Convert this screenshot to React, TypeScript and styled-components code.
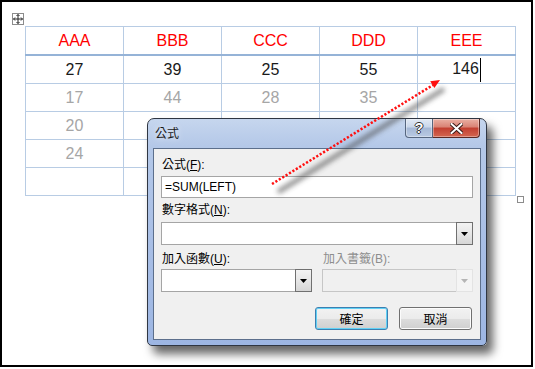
import styled, { createGlobalStyle } from "styled-components";

const GlobalStyle = createGlobalStyle`
  html, body { margin: 0; padding: 0; background: #fff; }
  body { font-family: "Liberation Sans", Arial, sans-serif; }
`;

const CJK = `"Liberation Sans", "Noto Sans CJK TC", sans-serif`;

const Frame = styled.div`
  position: relative;
  box-sizing: border-box;
  width: 533px;
  height: 367px;
  border: 2px solid #000;
  background: #fff;
  overflow: hidden;
  padding: 24px 0 0 23px;
`;

const TableWrap = styled.div`
  position: relative;
  width: 491px;
`;

const MoveHandle = styled.div`
  position: absolute;
  left: -13px;
  top: -13px;
  width: 12px;
  height: 12px;
  box-sizing: border-box;
  border: 1px solid #8c8c8c;
  background: #fff;
  display: flex;
  align-items: center;
  justify-content: center;
`;

const ResizeHandle = styled.div`
  position: absolute;
  left: calc(100% + 1px);
  top: 100%;
  width: 7px;
  height: 7px;
  box-sizing: border-box;
  border: 1px solid #8c8c8c;
  background: #fff;
`;

const Grid = styled.table`
  border-collapse: collapse;
  table-layout: fixed;
  width: 491px;
  font-family: "Liberation Sans", Arial, sans-serif;
  font-size: 16px;
`;

type Tone = "head" | "dark" | "dim";

const toneColor: Record<Tone, string> = {
  head: "#ff0000",
  dark: "#1a1a1a",
  dim: "#a6a6a6",
};

const Cell = styled.td<{ $tone: Tone }>`
  border: 1px solid #b8cce4;
  border-bottom: ${(p) => (p.$tone === "head" ? "2px solid #95b3d7" : "1px solid #b8cce4")};
  height: 27px;
  padding: 0;
  text-align: center;
  color: ${(p) => toneColor[p.$tone]};
`;

const Caret = styled.span`
  display: inline-block;
  width: 1px;
  height: 24px;
  margin-left: 1px;
  background: #000;
  vertical-align: middle;
`;

const Dialog = styled.div`
  position: absolute;
  left: 145px;
  top: 116px;
  width: 340px;
  height: 228px;
  box-sizing: border-box;
  border: 1px solid #2f3642;
  border-radius: 7px 7px 5px 5px;
  background: linear-gradient(
    to bottom,
    #c6d6ee 0%,
    #b4c8e8 12%,
    #aac0e6 50%,
    #9db6e3 100%
  );
  box-shadow: 6px 8px 10px rgba(0, 0, 0, 0.6);
  padding: 0 5px 5px 5px;
  display: flex;
  flex-direction: column;
  font-family: ${CJK};
  font-size: 12px;
`;

const TitleBar = styled.div`
  height: 29px;
  display: flex;
  justify-content: space-between;
  align-items: flex-start;
`;

const Title = styled.div`
  margin: 7px 0 0 2px;
  line-height: 16px;
  color: #1a1a1a;
  text-shadow: 0 0 6px rgba(255, 255, 255, 0.9);
`;

const CaptionGroup = styled.div`
  display: flex;
  margin-right: 1px;
`;

const CaptionButton = styled.div<{ $kind: "help" | "close" }>`
  box-sizing: border-box;
  height: 19px;
  width: ${(p) => (p.$kind === "help" ? "28px" : "47px")};
  border: 1px solid ${(p) => (p.$kind === "help" ? "#56667f" : "#5a2823")};
  border-top: none;
  border-left-width: ${(p) => (p.$kind === "help" ? "1px" : "0")};
  border-radius: ${(p) => (p.$kind === "help" ? "0 0 0 4px" : "0 0 4px 0")};
  background: ${(p) =>
    p.$kind === "help"
      ? "linear-gradient(to bottom, #e2eaf5 0%, #c9d6ea 45%, #a5b8d6 50%, #b9cae3 100%)"
      : "linear-gradient(to bottom, #eab0a4 0%, #d98274 45%, #c23f31 50%, #d46650 100%)"};
  box-shadow: inset 0 0 0 1px rgba(255, 255, 255, 0.35);
  display: flex;
  align-items: center;
  justify-content: center;
  color: #fff;
  font: bold 14px "Liberation Sans", Arial, sans-serif;
  text-shadow: 1px 0 0 #333, -1px 0 0 #333, 0 1px 0 #333, 0 -1px 0 #333;
`;

const Client = styled.div`
  flex: 1;
  box-sizing: border-box;
  background: #f0f0f0;
  border: 1px solid #5c6f8c;
  padding: 8px 7px 0 7px;
  display: flex;
  flex-direction: column;
`;

const Label = styled.div<{ $gap: number; $disabled?: boolean }>`
  margin-top: ${(p) => p.$gap}px;
  padding-left: 1px;
  line-height: 16px;
  height: 16px;
  color: ${(p) => (p.$disabled ? "#8d8d8d" : "#000")};
  u { text-decoration: underline; }
`;

const TextBox = styled.div`
  margin-top: 3px;
  height: 22px;
  box-sizing: border-box;
  border: 1px solid #a5a5a5;
  background: #fff;
  padding-left: 3px;
  font: 12px "Liberation Sans", Arial, sans-serif;
  line-height: 20px;
  color: #000;
`;

const Combo = styled.div<{ $gap: number; $disabled?: boolean }>`
  margin-top: ${(p) => p.$gap}px;
  height: 23px;
  box-sizing: border-box;
  border: 1px solid ${(p) => (p.$disabled ? "#c6c6c6" : "#a5a5a5")};
  background: ${(p) => (p.$disabled ? "#f0f0f0" : "#fff")};
  display: flex;
  justify-content: flex-end;
`;

const DropButton = styled.div<{ $disabled?: boolean }>`
  width: 17px;
  box-sizing: border-box;
  border: 1px solid ${(p) => (p.$disabled ? "#e3e3e3" : "#707070")};
  margin: -1px -1px -1px 0;
  background: ${(p) =>
    p.$disabled ? "#f4f4f4" : "linear-gradient(to bottom, #f3f3f3, #e6e6e6 50%, #d6d6d6)"};
  display: flex;
  align-items: center;
  justify-content: center;
`;

const Columns = styled.div`
  display: grid;
  grid-template-columns: 1fr 1fr;
  column-gap: 10px;
`;

const Column = styled.div`
  display: flex;
  flex-direction: column;
`;

const ButtonRow = styled.div`
  margin-top: 15px;
  display: flex;
  justify-content: flex-end;
  gap: 11px;
  padding-right: 1px;
`;

const PushButton = styled.div<{ $focus?: boolean }>`
  width: 73px;
  height: 23px;
  box-sizing: border-box;
  border: 1px solid ${(p) => (p.$focus ? "#3c7fb1" : "#707070")};
  border-radius: 3px;
  background: linear-gradient(to bottom, #f2f2f2 0%, #ebebeb 50%, #dddddd 51%, #cfcfcf 100%);
  box-shadow: inset 0 0 0 1px ${(p) => (p.$focus ? "#61d1f5" : "#fcfcfc")};
  display: flex;
  align-items: center;
  justify-content: center;
  color: #000;
`;

const ArrowLayer = styled.svg`
  position: absolute;
  left: -2px;
  top: -2px;
  pointer-events: none;
`;

function Triangle({ disabled }: { disabled?: boolean }) {
  return (
    <svg width="7" height="4" viewBox="0 0 7 4">
      <polygon points="0,0 7,0 3.5,4" fill={disabled ? "#b5b5b5" : "#000"} />
    </svg>
  );
}

const rows: { tone: Tone; cells: string[] }[] = [
  { tone: "head", cells: ["AAA", "BBB", "CCC", "DDD", "EEE"] },
  { tone: "dark", cells: ["27", "39", "25", "55", "146"] },
  { tone: "dim", cells: ["17", "44", "28", "35", ""] },
  { tone: "dim", cells: ["20", "", "", "", ""] },
  { tone: "dim", cells: ["24", "", "", "", ""] },
  { tone: "dim", cells: ["", "", "", "", ""] },
];

export default function App() {
  return (
    <>
      <GlobalStyle />
      <Frame>
        <TableWrap>
          <MoveHandle>
            <svg width="10" height="10" viewBox="0 0 10 10">
              <path
                d="M5 0.5 L5 9.5 M0.5 5 L9.5 5 M3.5 2 L5 0.5 L6.5 2 M3.5 8 L5 9.5 L6.5 8 M2 3.5 L0.5 5 L2 6.5 M8 3.5 L9.5 5 L8 6.5"
                stroke="#222"
                strokeWidth="1"
                fill="none"
              />
            </svg>
          </MoveHandle>
          <Grid>
            <tbody>
              {rows.map((row, r) => (
                <tr key={r}>
                  {row.cells.map((c, i) => (
                    <Cell key={i} $tone={row.tone}>
                      {c}
                      {r === 1 && i === 4 && <Caret />}
                    </Cell>
                  ))}
                </tr>
              ))}
            </tbody>
          </Grid>
          <ResizeHandle />
        </TableWrap>

        <Dialog>
          <TitleBar>
            <Title>公式</Title>
            <CaptionGroup>
              <CaptionButton $kind="help">?</CaptionButton>
              <CaptionButton $kind="close">
                <svg width="13" height="11" viewBox="0 0 13 11">
                  <path
                    d="M1.5 1 L11.5 10 M11.5 1 L1.5 10"
                    stroke="#3a1a16"
                    strokeWidth="4"
                    strokeLinecap="square"
                  />
                  <path
                    d="M1.5 1 L11.5 10 M11.5 1 L1.5 10"
                    stroke="#fff"
                    strokeWidth="2"
                    strokeLinecap="square"
                  />
                </svg>
              </CaptionButton>
            </CaptionGroup>
          </TitleBar>
          <Client>
            <Label $gap={0}>
              公式(<u>F</u>):
            </Label>
            <TextBox>=SUM(LEFT)</TextBox>
            <Label $gap={4}>
              數字格式(<u>N</u>):
            </Label>
            <Combo $gap={4}>
              <DropButton>
                <Triangle />
              </DropButton>
            </Combo>
            <Columns>
              <Column>
                <Label $gap={6}>
                  加入函數(<u>U</u>):
                </Label>
                <Combo $gap={2}>
                  <DropButton>
                    <Triangle />
                  </DropButton>
                </Combo>
              </Column>
              <Column>
                <Label $gap={6} $disabled>
                  加入書籤(B):
                </Label>
                <Combo $gap={2} $disabled>
                  <DropButton $disabled>
                    <Triangle disabled />
                  </DropButton>
                </Combo>
              </Column>
            </Columns>
            <ButtonRow>
              <PushButton $focus>確定</PushButton>
              <PushButton>取消</PushButton>
            </ButtonRow>
          </Client>
        </Dialog>

        <ArrowLayer width="535" height="369" viewBox="0 0 535 369">
          <defs>
            <filter id="arrowShadow" x="-20%" y="-20%" width="140%" height="140%">
              <feGaussianBlur stdDeviation="2.5" />
            </filter>
          </defs>
          <g filter="url(#arrowShadow)" opacity="0.6">
            <line x1="278" y1="192" x2="444" y2="89" stroke="#444" strokeWidth="5" />
          </g>
          <line
            x1="272"
            y1="184"
            x2="433"
            y2="85"
            stroke="#ff1010"
            strokeWidth="2.5"
            strokeDasharray="2.2 1.8"
          />
          <polygon points="440,80 434.4,88.1 430.2,81.3" fill="#ff1010" />
        </ArrowLayer>
      </Frame>
    </>
  );
}
